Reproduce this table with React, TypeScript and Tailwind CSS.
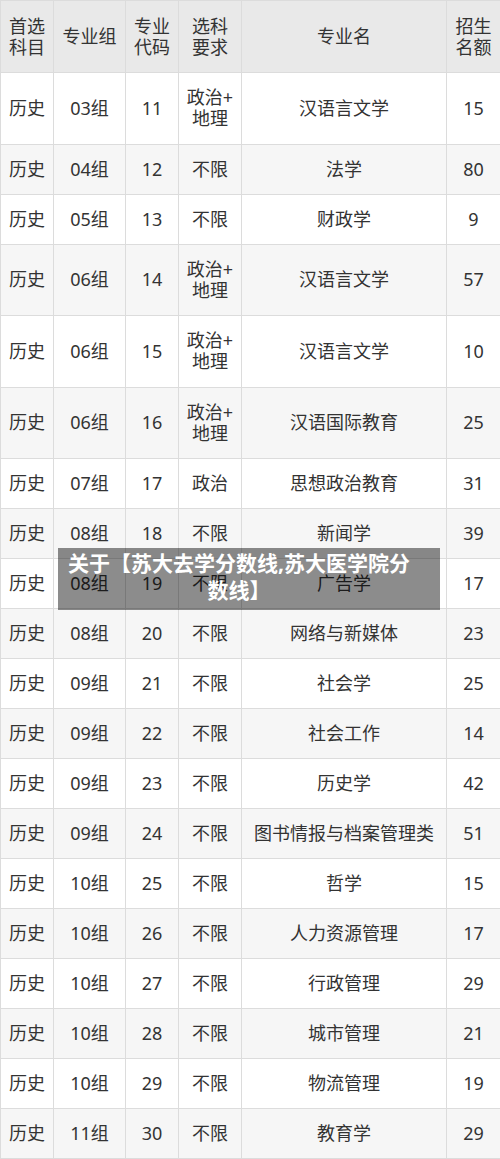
const rows: [string, string, string, string, string][] = [
  ['03组', '11', '政治+地理', '汉语言文学', '15'],
  ['04组', '12', '不限', '法学', '80'],
  ['05组', '13', '不限', '财政学', '9'],
  ['06组', '14', '政治+地理', '汉语言文学', '57'],
  ['06组', '15', '政治+地理', '汉语言文学', '10'],
  ['06组', '16', '政治+地理', '汉语国际教育', '25'],
  ['07组', '17', '政治', '思想政治教育', '31'],
  ['08组', '18', '不限', '新闻学', '39'],
  ['08组', '19', '不限', '广告学', '17'],
  ['08组', '20', '不限', '网络与新媒体', '23'],
  ['09组', '21', '不限', '社会学', '25'],
  ['09组', '22', '不限', '社会工作', '14'],
  ['09组', '23', '不限', '历史学', '42'],
  ['09组', '24', '不限', '图书情报与档案管理类', '51'],
  ['10组', '25', '不限', '哲学', '15'],
  ['10组', '26', '不限', '人力资源管理', '17'],
  ['10组', '27', '不限', '行政管理', '29'],
  ['10组', '28', '不限', '城市管理', '21'],
  ['10组', '29', '不限', '物流管理', '19'],
  ['11组', '30', '不限', '教育学', '29'],
];

const cell = 'border border-[#dcdcdc] text-center align-middle px-0';

export default function App() {
  return (
    <div
      className="relative w-[500px] h-[1159px] overflow-hidden bg-white text-[18px] leading-[21px] text-[#333]"
      style={{ fontFamily: '"Noto Sans", "Noto Sans CJK SC", sans-serif' }}
    >
      <table className="w-[500px] border-collapse table-fixed">
        <colgroup>
          <col className="w-[53px]" />
          <col className="w-[72px]" />
          <col className="w-[53px]" />
          <col className="w-[63px]" />
          <col className="w-[205px]" />
          <col className="w-[54px]" />
        </colgroup>
        <thead>
          <tr className="h-[72px] bg-[#e9e9e9]">
            <th className={`${cell} font-normal`}>首选<br />科目</th>
            <th className={`${cell} font-normal`}>专业组</th>
            <th className={`${cell} font-normal`}>专业<br />代码</th>
            <th className={`${cell} font-normal`}>选科<br />要求</th>
            <th className={`${cell} font-normal`}>专业名</th>
            <th className={`${cell} font-normal`}>招生<br />名额</th>
          </tr>
        </thead>
        <tbody>
          {rows.map((r, i) => {
            const two = r[2] === '政治+地理';
            return (
              <tr
                key={i}
                className={`${two ? 'h-[71.5px]' : 'h-[50px]'} ${i % 2 === 1 ? 'bg-[#f6f6f6]' : 'bg-white'}`}
              >
                <td className={cell}>历史</td>
                <td className={cell}>{r[0]}</td>
                <td className={cell}>{r[1]}</td>
                <td className={cell}>
                  {two ? (
                    <>
                      政治+
                      <br />
                      地理
                    </>
                  ) : (
                    r[2]
                  )}
                </td>
                <td className={cell}>{r[3]}</td>
                <td className={cell}>{r[4]}</td>
              </tr>
            );
          })}
        </tbody>
      </table>

      {/* title overlay */}
      <div className="absolute left-[58px] top-[548px] w-[382px] h-[62px] bg-[rgba(0,0,0,0.45)] pl-[5px] pr-[25px] pt-[2px] text-center text-white font-bold text-[21px] leading-[27px]">
        关于【苏大去学分数线,苏大医学院分数线】
      </div>
    </div>
  );
}
